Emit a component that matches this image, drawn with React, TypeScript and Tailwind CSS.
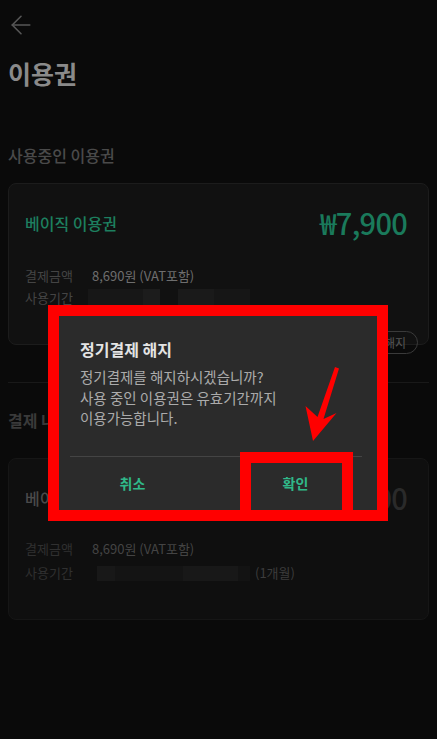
import React from 'react';
import { ArrowLeft } from 'lucide-react';

const font = "font-['Noto_Sans_CJK_KR','Noto_Sans',sans-serif]";

const InfoRow: React.FC<{ label: string; children: React.ReactNode; labelColor: string }> = ({ label, children, labelColor }) => (
  <div className="flex items-center h-[22px] text-[13px]">
    <span className={`w-[67px] ${labelColor}`}>{label}</span>
    {children}
  </div>
);

const App: React.FC = () => {
  return (
    <div className={`relative w-[437px] h-[739px] overflow-hidden bg-[#0a0a0a] ${font}`}>
      <div className="px-2">
        {/* header */}
        <div className="h-[50px] flex items-center">
          <ArrowLeft size={30} strokeWidth={1.3} className="text-[#575757] -ml-[2px]" />
        </div>
        <h1 className="mt-[7px] text-[25px] leading-[32px] font-bold text-[#8a8a8a]">이용권</h1>

        <h2 className="mt-[55px] text-[16px] leading-[22px] font-medium text-[#4a4a4a]">사용중인 이용권</h2>

        {/* current ticket */}
        <div className="relative mt-[17px] h-[162px] rounded-lg border border-[#1c1c1c] bg-[#111111] pl-4 pr-[21px] pt-[22px]">
          <div className="flex items-center justify-between h-[34px]">
            <span className="text-[16px] font-medium text-[#1d7f5f]">베이직 이용권</span>
            <span className="text-[29px] font-medium text-[#1a7a5b] tracking-tight">₩7,900</span>
          </div>
          <div className="mt-[25px]">
            <InfoRow label="결제금액" labelColor="text-[#444444]">
              <span className="text-[#6e6e6e]">8,690원 (VAT포함)</span>
            </InfoRow>
            <InfoRow label="사용기간" labelColor="text-[#444444]">
              <div className="flex h-[18px] -ml-[4px]">
                <div className="w-[55px] bg-[#171717]" />
                <div className="w-[17px] bg-[#1c1c1c]" />
                <div className="w-[18px]" />
                <div className="w-[36px] bg-[#1a1a1a]" />
                <div className="w-[36px] bg-[#161616]" />
              </div>
            </InfoRow>
          </div>
          <div className="absolute right-[10px] bottom-[-10px] h-[23px] px-[11px] rounded-full border border-[#3a3a3a] text-[12px] leading-[21px] text-[#555555]">
            해지
          </div>
        </div>

        <div className="mt-[37px] h-px bg-[#191919]" />

        <h2 className="mt-[26px] text-[16px] leading-[22px] font-bold text-[#3a3a3a]">결제 내역</h2>

        {/* history */}
        <div className="mt-[27px] h-[162px] rounded-lg border border-[#161616] bg-[#0f0f0f] pl-4 pr-[21px] pt-[22px]">
          <div className="flex items-center justify-between h-[34px]">
            <span className="text-[16px] font-medium text-[#4a4a4a]">베이직 이용권</span>
            <span className="text-[29px] font-medium text-[#2a2a2a] tracking-tight">₩7,900</span>
          </div>
          <div className="mt-[23px] flex flex-col gap-[2px]">
            <InfoRow label="결제금액" labelColor="text-[#303030]">
              <span className="text-[#444444]">8,690원 (VAT포함)</span>
            </InfoRow>
            <InfoRow label="사용기간" labelColor="text-[#303030]">
              <div className="flex h-[15px] ml-[5px]">
                <div className="w-[18px] bg-[#181818]" />
                <div className="w-[68px] bg-[#141414]" />
                <div className="w-[55px] bg-[#181818]" />
                <div className="w-[12px] bg-[#131313]" />
              </div>
              <span className="ml-[5px] text-[#3c3c3c]">(1개월)</span>
            </InfoRow>
          </div>
        </div>
      </div>

      {/* dialog layer */}
      <div className="absolute inset-0 pt-[305px] pl-[48px]">
        <div className="relative w-[340px] border-[11px] border-[#ff0000]">
          <div className="w-[318px] h-[194px] bg-[#2b2b2b] flex flex-col">
            <div className="px-[21px] pt-[22px]">
              <div className="text-[16px] leading-[22px] font-bold text-[#e4e4e4]">정기결제 해지</div>
              <div className="mt-[7px] text-[14.5px] leading-[20.5px] text-[#ababab]">
                <p>정기결제를 해지하시겠습니까?</p>
                <p>사용 중인 이용권은 유효기간까지</p>
                <p>이용가능합니다.</p>
              </div>
            </div>
            <div className="mt-[27px] ml-[11px] mr-[15px] h-px bg-[#444444]" />
            <div className="flex flex-1 text-[14px] font-bold text-[#30b889]">
              <div className="flex-1 flex items-center justify-center -ml-[8px]">취소</div>
              <div className="flex-1 flex items-center justify-center">확인</div>
            </div>
          </div>
          <div className="absolute left-[181px] top-[136px] w-[113px] bottom-[-11px] border-[11px] border-[#ff0000]" />
        </div>
      </div>

      {/* annotation arrow */}
      <svg className="absolute inset-0 pointer-events-none" width="437" height="739" viewBox="0 0 437 739">
        <path d="M335 367 L339 368.5 L323.5 419 L336.5 413 L313 441 L305.5 406 L317.5 417 Z" fill="#ff0000" />
      </svg>
    </div>
  );
};

export default App;
